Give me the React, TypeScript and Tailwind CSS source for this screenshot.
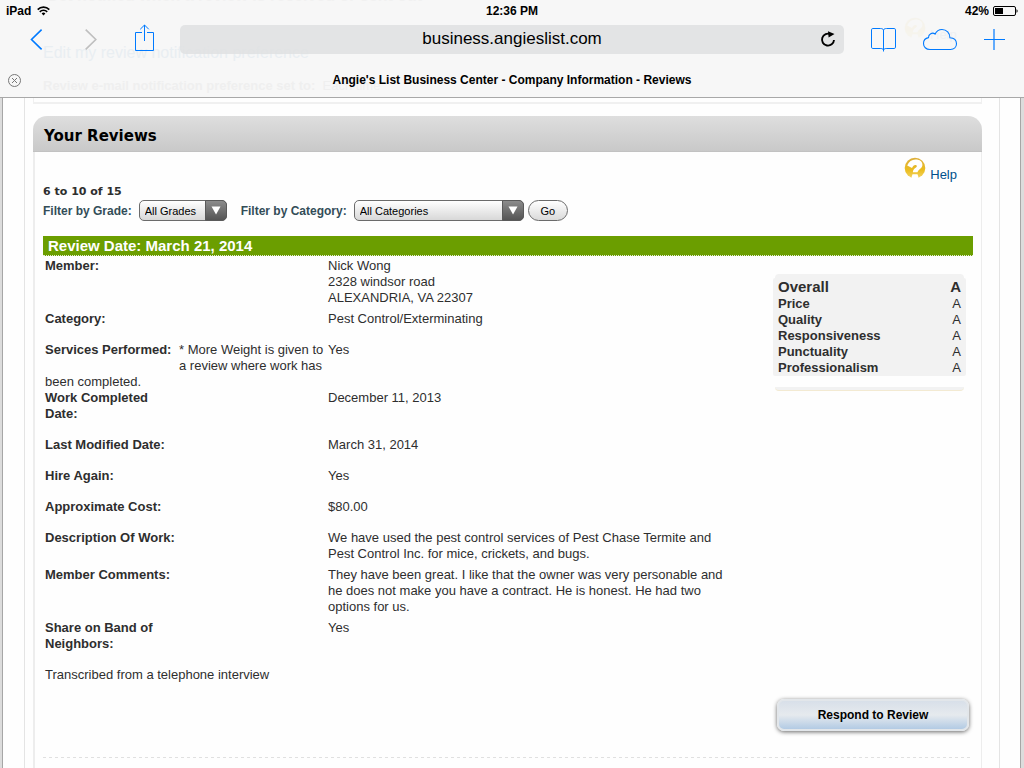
import { useState } from "react";

const SANS = "font-['Liberation_Sans',Arial,sans-serif]";
const VERDANA = "font-['DejaVu_Sans',Verdana,sans-serif]";

const grades = [
  { name: "Price", grade: "A" },
  { name: "Quality", grade: "A" },
  { name: "Responsiveness", grade: "A" },
  { name: "Punctuality", grade: "A" },
  { name: "Professionalism", grade: "A" },
];

const details = [
  { label: "Member:", lines: ["Nick Wong", "2328 windsor road", "ALEXANDRIA, VA 22307"], tight: true },
  { label: "Category:", lines: ["Pest Control/Exterminating"] },
  {
    label: "Services Performed:",
    note: "* More Weight is given to a review where work has been completed.",
    lines: ["Yes"],
    flush: true,
  },
  { label: "Work Completed Date:", lines: ["December 11, 2013"] },
  { label: "Last Modified Date:", lines: ["March 31, 2014"] },
  { label: "Hire Again:", lines: ["Yes"] },
  { label: "Approximate Cost:", lines: ["$80.00"] },
  {
    label: "Description Of Work:",
    lines: [
      "We have used the pest control services of Pest Chase Termite and Pest Control Inc. for mice, crickets, and bugs.",
    ],
    tight: true,
  },
  {
    label: "Member Comments:",
    lines: [
      "They have been great. I like that the owner was very personable and he does not make you have a contract. He is honest. He had two options for us.",
    ],
    tight: true,
  },
  { label: "Share on Band of Neighbors:", lines: ["Yes"] },
];

function HelpIcon() {
  return (
    <svg width="22" height="22" viewBox="0 0 22 22" aria-hidden="true">
      <defs>
        <linearGradient id="gold" x1="0" y1="0" x2="0" y2="1">
          <stop offset="0" stopColor="#dcae3c" />
          <stop offset="0.6" stopColor="#ebbd20" />
          <stop offset="1" stopColor="#f3d466" />
        </linearGradient>
      </defs>
      <circle cx="11" cy="11" r="10.3" fill="url(#gold)" />
      <path
        d="M3.2 8.6C4.8 4.600 7.800 2.600 11.500 2.600c4.500 0 7 2.200 6.900 5.400-.2 3.500-3.900 4.200-4.900 7.200H8.800c.2-2.700 1.700-3.700 3.200-4.700 1.200-.9 1.300-2.200-.2-2.500C10.300 7.700 9 8.800 8 11z"
        fill="#fff"
      />
      <path d="M8.500 17.200h5L15 22H7z" fill="#fff" />
    </svg>
  );
}

function StatusBar() {
  return (
    <div className="grid h-[22px] grid-cols-3 items-center px-[6px] text-[12px] font-bold text-black">
      <div className="flex items-center gap-[6px]">
        <span>iPad</span>
        <svg width="13" height="10" viewBox="0 0 13 10" fill="none" stroke="#000" strokeWidth="1.7" aria-hidden="true">
          <path d="M.7 3.6a8.2 8.2 0 0 1 11.6 0" />
          <path d="M2.8 5.8a5.2 5.2 0 0 1 7.4 0" />
          <path d="M4.6 7.4 6.5 9.6l1.9-2.2a2.7 2.7 0 0 0-3.8 0z" fill="#000" stroke="none" />
        </svg>
      </div>
      <div className="text-center">12:36 PM</div>
      <div className="flex items-center justify-end gap-1">
        <span>42%</span>
        <svg width="25" height="10" viewBox="0 0 25 10" aria-hidden="true">
          <rect x=".5" y=".5" width="22" height="9" rx="1.5" fill="none" stroke="#000" />
          <rect x="2" y="2" width="8" height="6" fill="#000" />
          <path d="M23.5 3.2c.8.3 1.1.9 1.1 1.8s-.3 1.5-1.1 1.8z" fill="#000" />
        </svg>
      </div>
    </div>
  );
}

function BrowserChrome() {
  const [url, setUrl] = useState("business.angieslist.com");

  return (
    <header className="relative h-[98px] overflow-hidden border-b border-[#a8a8a8] bg-[#f7f7f7]">
      {/* page content that shines through the translucent bar */}
      <div aria-hidden="true" className="absolute inset-0 whitespace-nowrap">
        <p className="absolute left-[46px] -top-3 text-[16px] leading-4 font-bold text-[#f1f1f1]">
          Get notified when a review is received or sent out
        </p>
        <p className="absolute left-[43px] top-[45px] text-[16px] leading-4 text-[#e9eef2]">
          Edit my review notification preference
        </p>
        <p className="absolute left-[43px] top-[78px] text-[13px] leading-4 text-[#efefef]">
          <b>Review e-mail notification preference set to:</b>&nbsp; Each time
        </p>
        <div className="absolute left-[904px] top-[17px] opacity-5">
          <HelpIcon />
        </div>
        <p className="absolute left-[930px] top-[27px] text-[13px] leading-4 text-[#eef0f2]">Help</p>
      </div>

      <div className="relative">
        <StatusBar />
        <nav className="flex h-[34px] items-center pr-[19px] pl-[30px]">
          <div className="flex items-center gap-9 pr-6">
            <button type="button" aria-label="Back">
              <svg width="16" height="22" viewBox="0 0 16 22" fill="none" stroke="#007aff" strokeWidth="1.6">
                <path d="M11.6 1.6 1.5 11.5l10.1 9.9" />
              </svg>
            </button>
            <button type="button" aria-label="Forward">
              <svg width="16" height="22" viewBox="0 0 16 22" fill="none" stroke="#bfbfbf" strokeWidth="1.6">
                <path d="M3.7 1.6l10.1 9.9-10.1 9.9" />
              </svg>
            </button>
            <button type="button" aria-label="Share">
              <svg width="22" height="30" viewBox="0 0 22 30" fill="none" stroke="#007aff">
                <path d="M8 8.500H1.500v18h18v-18H13M10.500 17V1M6.200 5.300l4.300-4.300 4.300 4.300" />
              </svg>
            </button>
          </div>
          <div className="relative flex-1">
            <input
              type="text"
              aria-label="Address"
              value={url}
              onChange={(e) => setUrl(e.target.value)}
              className="block h-[29px] w-full rounded-[5px] bg-[#dfe0e2]/85 px-8 text-center text-[17px] text-black outline-none"
            />
            <button type="button" aria-label="Reload" className="absolute top-[6px] right-2">
              <svg width="16" height="17" viewBox="0 0 16 17" fill="none" stroke="#000" strokeWidth="1.9">
                <path d="M10.6 3.2A6 6 0 1 0 14 9" />
                <path d="M8 .2 14.5 3 8.6 6.6z" fill="#000" stroke="none" />
              </svg>
            </button>
          </div>
          <div className="flex items-center gap-[26px] pl-[26px]">
            <button type="button" aria-label="Bookmarks">
              <svg width="26" height="25" viewBox="0 0 26 25" fill="none" stroke="#007aff">
                <path d="M13.5 3c-.6-1.2-1.6-1.5-3-1.5H2.800c-.8 0-1.300.5-1.300 1.300v17.400c0 .8.5 1.300 1.300 1.300h8c1.400 0 2.200.5 2.700 1.500.5-1 1.300-1.500 2.700-1.500h8c.8 0 1.300-.5 1.300-1.300V2.800c0-.8-.5-1.300-1.300-1.300h-7.700c-1.400 0-2.400.3-3 1.500zM13.500 3v21.500" />
              </svg>
            </button>
            <button type="button" aria-label="iCloud Tabs">
              <svg width="36" height="23" viewBox="0 0 36 23" fill="none" stroke="#007aff" strokeWidth="1.1">
                <path d="M8 21.500c-4 0-6.500-2.700-6.500-6 0-3.100 2.300-5.400 5-5.900-.2-3.600 4-5.700 6.600-3.500 1.300-2.800 3.800-4.600 6.900-4.600 4.600 0 8 3.600 7.900 8.200 4 .2 6.600 2.700 6.600 6.100 0 3.400-2.600 5.700-6 5.700z" />
              </svg>
            </button>
            <button type="button" aria-label="New Tab">
              <svg width="21" height="21" viewBox="0 0 21 21" fill="none" stroke="#007aff" strokeWidth="1.2">
                <path d="M10 0v21M0 10.500h21" />
              </svg>
            </button>
          </div>
        </nav>
        <div className="mt-[7px] grid h-[34px] grid-cols-[1fr_auto_1fr] items-center px-2">
          <button type="button" aria-label="Close Tab" className="justify-self-start">
            <svg width="13" height="13" viewBox="0 0 13 13" fill="none" stroke="#777">
              <circle cx="6.500" cy="6.500" r="6" />
              <path d="M4 4l5 5M9 4 4 9" />
            </svg>
          </button>
          <p className="text-[12px] font-bold text-black">
            Angie's List Business Center - Company Information - Reviews
          </p>
        </div>
      </div>
    </header>
  );
}

function Filter({ id, label, options, className }: { id: string; label: string; options: string[]; className: string }) {
  return (
    <div className="flex items-center gap-[7px]">
      <label htmlFor={id} className="text-[12px] font-bold text-[#334d58]">
        {label}
      </label>
      <div className="relative">
        <select
          id={id}
          className={`block h-[21px] appearance-none rounded-[5px] border border-[#6b6b6b] bg-linear-to-b from-white to-[#d8d8d8] pl-[5px] text-[11px] text-black ${className}`}
        >
          {options.map((o) => (
            <option key={o}>{o}</option>
          ))}
        </select>
        <span className="pointer-events-none absolute inset-y-0 right-0 flex w-[22px] items-center justify-center rounded-r-[5px] border border-[#5a5a5a] bg-linear-to-b from-[#8c8c8c] to-[#555]">
          <svg width="10" height="9" viewBox="0 0 10 9" aria-hidden="true">
            <path d="M.5.500h9L5 8.500z" fill="#fff" />
          </svg>
        </span>
      </div>
    </div>
  );
}

function GradeCard() {
  return (
    <div className="mt-4 mr-[7px] w-[193px] shrink-0">
      <div className="mx-[2px] h-1 rounded-t-[4px] bg-[#f2f2f2]" />
      <div className="rounded-[2px] bg-[#f2f2f2] px-[5px]">
        <table className="w-full text-[13px] leading-4">
          <thead>
            <tr className="h-[18px] text-[15px]">
              <th scope="row" className="text-left font-bold">Overall</th>
              <td className="text-right font-bold">A</td>
            </tr>
          </thead>
          <tbody>
            {grades.map((g) => (
              <tr key={g.name}>
                <th scope="row" className="text-left font-bold">{g.name}</th>
                <td className="text-right">{g.grade}</td>
              </tr>
            ))}
          </tbody>
        </table>
      </div>
      <div className="mx-[2px] mt-[11px] h-1 rounded-b-[4px] border-b border-[#f3ead2] bg-[#f2f2f2]" />
    </div>
  );
}

export default function App() {
  return (
    <div className={`flex min-h-screen flex-col bg-[#dcdcdc] text-[13px] leading-4 text-[#2e2e2e] ${SANS}`}>
      <BrowserChrome />
      <div className="mr-[3px] ml-[2px] flex flex-1 flex-col border-x border-[#a6a6a6] bg-[#fefefe] pr-5 pl-[21px]">
        <div className="flex flex-1 flex-col border-x border-[#e4e4e4] pr-[17px] pl-2">
          <div className="h-[6px] border-x border-b-2 border-[#f0f0f0]" />

          <section className="mt-3 flex flex-1 flex-col">
            <h2 className={`flex h-[36px] items-center rounded-t-[14px] border-b border-[#c2c2c2] bg-linear-to-b from-[#dedede] to-[#c9c9c9] pt-1 pl-[11px] text-[15px] font-bold text-black ${VERDANA}`}>
              Your Reviews
            </h2>
            <div className="flex-1 border-r border-l-2 border-[#ededed] pr-2 pl-2">
              <div className="flex h-8 items-start justify-end pt-[5px] pr-4">
                <HelpIcon />
                <a href="#help" className="mt-[10px] ml-1 text-[#00508c]">
                  Help
                </a>
              </div>
              <p className={`text-[11px] font-bold ${VERDANA}`}>6 to 10 of 15</p>
              <form className="flex items-center" onSubmit={(e) => e.preventDefault()}>
                <Filter id="grade" label="Filter by Grade:" options={["All Grades", "A", "B", "C", "D", "F"]} className="w-[88px]" />
                <div className="ml-[14px]">
                  <Filter id="category" label="Filter by Category:" options={["All Categories", "Pest Control/Exterminating"]} className="w-[170px]" />
                </div>
                <button
                  type="submit"
                  className="ml-1 h-[21px] w-10 rounded-full border border-[#6b6b6b] bg-linear-to-b from-white to-[#dadada] text-[11px] text-black"
                >
                  Go
                </button>
              </form>

              <article className="mt-[15px]">
                <h3 className="h-5 border-b border-dotted border-[#e4edd2] bg-[#6b9e00] pl-[5px] text-[15px] leading-[20px] font-bold text-white">
                  Review Date: March 21, 2014
                </h3>
                <div className="flex items-start justify-between pt-[2px] pl-[2px]">
                  <dl className="w-[687px]">
                    {details.map((d) => (
                      <div
                        key={d.label}
                        className={`grid grid-cols-[283px_1fr] ${d.flush ? "" : d.tight ? "pb-[5px]" : "pb-[15px]"}`}
                      >
                        <dt>
                          <span className={d.note ? "float-left mr-1 h-8 w-[130px] font-bold" : "block w-[130px] font-bold"}>
                            {d.label}
                          </span>
                          {d.note}
                        </dt>
                        <dd>
                          {d.lines.map((line) => (
                            <p key={line}>{line}</p>
                          ))}
                        </dd>
                      </div>
                    ))}
                  </dl>
                  <GradeCard />
                </div>
                <p className="pl-[2px]">Transcribed from a telephone interview</p>
                <div className="mt-4 flex justify-end pr-1">
                  <button
                    type="button"
                    className="h-[32px] w-[192px] rounded-[7px] border-2 border-[#e2e6ea] bg-linear-to-b from-[#d6dee8] via-[#e6eaee] to-[#abc6e2] bg-origin-border text-[12px] font-bold text-black shadow-[0_1px_4px_#666]"
                  >
                    Respond to Review
                  </button>
                </div>
                <div className="mt-[26px] mb-[9px] h-px bg-[repeating-linear-gradient(90deg,#e0e0e0_0_3px,transparent_3px_6px)]" />
              </article>
            </div>
          </section>
        </div>
      </div>
    </div>
  );
}
